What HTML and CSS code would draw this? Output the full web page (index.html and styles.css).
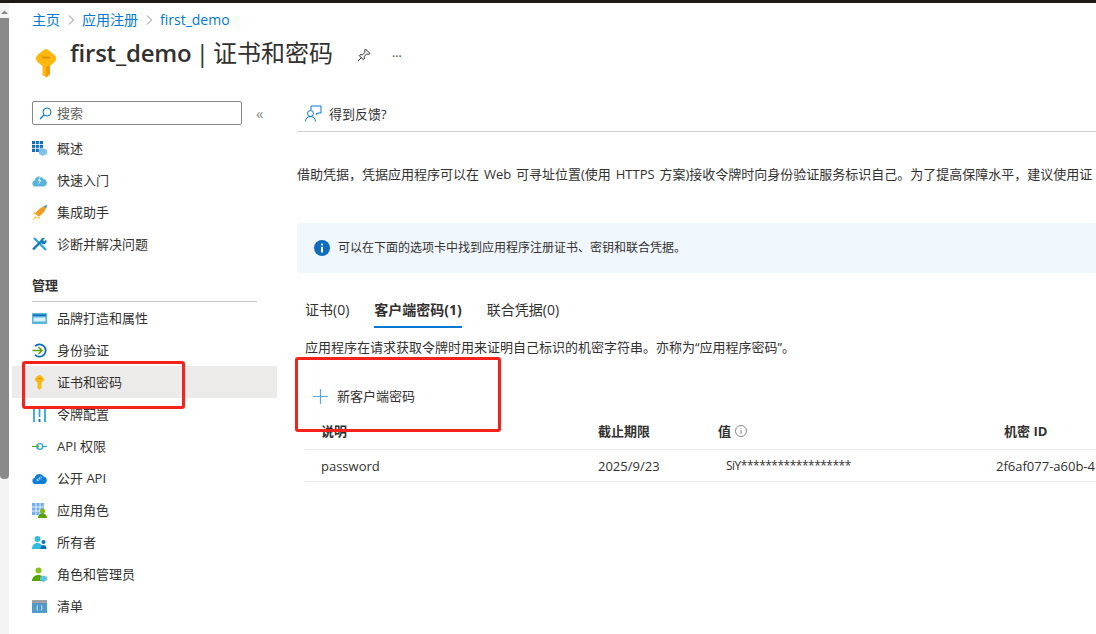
FILE: index.html
```html
<!DOCTYPE html>
<html lang="zh-CN">
<head>
    <meta charset="UTF-8">
    <meta name="viewport" content="width=device-width, initial-scale=1.0">
    <title>first_demo | 证书和密码</title>
    <link rel="stylesheet" href="styles.css">
</head>
<body>
    <div class="topline"></div>
    <div class="window">
        <div class="scrollbar">
            <svg class="scroll-arrow" width="9" height="6" viewBox="0 0 9 6"><path d="M1 5 4.500 1.500 8 5z" fill="#8a8a8a"/></svg>
            <div class="scroll-thumb"></div>
        </div>
        <div class="page">
            <div class="breadcrumb">
                <a>主页</a>
                <svg width="6" height="10" viewBox="0 0 6 10"><path d="M1 .5 5.500 5 1 9.500" fill="none" stroke="#8a8886"/></svg>
                <a>应用注册</a>
                <svg width="6" height="10" viewBox="0 0 6 10"><path d="M1 .5 5.500 5 1 9.500" fill="none" stroke="#8a8886"/></svg>
                <a>first_demo</a>
            </div>
            <div class="title-row">
                <svg class="title-key" width="20" height="29" viewBox="0 0 20 29">
                    <path d="M10 0C11 0 12 .6 13 1.400L18 5.600C19.400 6.800 20 8 20 9.500S19.400 12.200 18 13.400L14 17V25L10.500 28.500 6.500 26V17L2 13.400C.6 12.200 0 11 0 9.500S.6 6.800 2 5.600L7 1.400C8 .6 9 0 10 0z" fill="#fcb80f"/>
                    <path d="M10 17v11.500l4-3.500v-8z" fill="#f29c0c"/>
                    <rect x="6" y="7.500" width="8" height="2" rx="1" fill="#d98c0a"/>
                </svg>
                <h1><strong>first_demo</strong> | 证书和密码</h1>
                <svg class="pin" width="14" height="14" viewBox="0 0 14 14"><path d="M8.500 1 13 5.500 11.800 6.200 9.700 6 7.300 8.500 7.200 11 6.300 11.800 2.300 7.700 3 6.800 5.500 6.700 8 4.300 7.800 2.200zM4.300 9.700 1 13" fill="none" stroke="#323130"/></svg>
                <span class="more">···</span>
            </div>
            <div class="columns">
                <nav class="sidebar">
                    <div class="search-row">
                        <div class="search">
                            <svg width="13" height="13" viewBox="0 0 13 13"><circle cx="8" cy="5" r="4" fill="none" stroke="#0078d4"/><path d="M5 8 1 12" stroke="#0078d4" stroke-width="1.200"/></svg>
                            <span>搜索</span>
                        </div>
                        <span class="collapse">«</span>
                    </div>

                    <a class="nav-item">
                        <svg width="15" height="15" viewBox="0 0 15 15"><path d="M0 0h11v11H0z" fill="#0f6cbd"/><path d="M3.500 0v11M7.300 0v11M0 3.500h11M0 7.300h11" stroke="#fff" stroke-width=".8"/><path d="M10.500 7 15 9v4l-4.500 2L7 13V9z" fill="#7fc4e8"/></svg>
                        概述
                    </a>
                    <a class="nav-item">
                        <svg width="15" height="15" viewBox="0 0 15 15"><path d="M3.500 13.500a3.200 3.200 0 0 1-.7-6.300A4.700 4.700 0 0 1 11.600 6a3.800 3.800 0 0 1 0 7.500z" fill="#59b4d9"/><path d="M8.500 3.500 6.500 7.500h2l-1.500 3" fill="none" stroke="#fff"/></svg>
                        快速入门
                    </a>
                    <a class="nav-item">
                        <svg width="15" height="15" viewBox="0 0 15 15"><path d="M3 9C5 5 9 2 15 0c-1 5-4 9-8 11.500z" fill="#f59a23"/><path d="M11.500 1 15 0l-.8 3.500z" fill="#3f9bd9"/><path d="M3 6.500.5 9.500 3.500 9zM6 11.500 5.500 14.500 8.500 12zM3.500 11 .5 15l4.500-2.500z" fill="#f7c325"/></svg>
                        集成助手
                    </a>
                    <a class="nav-item">
                        <svg width="15" height="15" viewBox="0 0 15 15"><path d="M2 1 14 13" stroke="#32a6dc" stroke-width="2.400"/><path d="M1 12.500 9.500 4" stroke="#0f7cbd" stroke-width="2.400"/><path d="M9 5.500a3.200 3.200 0 0 1 4-4.500l-2 2 1.300 1.300 2-1.500a3.200 3.200 0 0 1-4.500 4z" fill="#0f7cbd"/></svg>
                        诊断并解决问题
                    </a>

                    <div class="nav-heading">管理</div>

                    <a class="nav-item">
                        <svg width="15" height="15" viewBox="0 0 15 15"><rect y="2" width="15" height="11" rx="1" fill="#59b4d9"/><rect x="1" y="3.500" width="13" height="1.500" fill="#0f6cbd"/><rect x="1.500" y="6.500" width="12" height="4" fill="#d9f1fa"/></svg>
                        品牌打造和属性
                    </a>
                    <a class="nav-item">
                        <svg width="15" height="15" viewBox="0 0 15 15"><path d="M3 3.200A6.200 6.200 0 1 1 3 11.800" fill="none" stroke="#0f6cbd" stroke-width="1.800"/><path d="M.5 7.500h9M6.500 4l3.500 3.500L6.500 11" fill="none" stroke="#57a300" stroke-width="1.400"/></svg>
                        身份验证
                    </a>
                    <a class="nav-item active">
                        <svg width="15" height="15" viewBox="0 0 15 15"><path d="M7.500 0C8.500 0 12 2.500 12 4.500 12 5.800 10.500 6.800 9.500 7.500V13L7.500 15 5.500 13V7.500C4.500 6.800 3 5.800 3 4.500 3 2.500 6.500 0 7.500 0z" fill="#fcb80f"/><rect x="5.500" y="3" width="4" height="1" fill="#e0930a"/></svg>
                        证书和密码
                    </a>
                    <a class="nav-item">
                        <svg width="15" height="15" viewBox="0 0 15 15"><path d="M2 1v14M7.500 0v10M13 1v14" stroke="#32a6dc" stroke-width="1.800"/><path d="M7.500 12v3" stroke="#0f6cbd" stroke-width="1.800"/></svg>
                        令牌配置
                    </a>
                    <a class="nav-item">
                        <svg width="15" height="15" viewBox="0 0 15 15"><path d="M0 7.500h7M4.500 5.500l2 2-2 2" fill="none" stroke="#57a300" stroke-width="1.200"/><circle cx="8" cy="7.500" r="2.800" fill="none" stroke="#32a6dc" stroke-width="1.300"/><path d="M11 7.500h4" stroke="#32a6dc" stroke-width="1.200"/></svg>
                        API 权限
                    </a>
                    <a class="nav-item">
                        <svg width="15" height="15" viewBox="0 0 15 15"><path d="M3.500 13a3.200 3.200 0 0 1-.7-6.300A4.700 4.700 0 0 1 11.600 5.500a3.800 3.800 0 0 1 0 7.500z" fill="#0f7cd6"/><path d="M5 9.500 9.500 6" stroke="#cfe8f8" stroke-width="2.200" stroke-dasharray="1.500 1"/></svg>
                        公开 API
                    </a>
                    <a class="nav-item">
                        <svg width="15" height="15" viewBox="0 0 15 15"><path d="M0 0h12v12H0z" fill="#76aef0"/><path d="M4 0v12M8 0v12M0 4h12M0 8h12" stroke="#fff" stroke-width=".8"/><circle cx="10.500" cy="8" r="2.500" fill="#7fba00"/><path d="M6 15c0-3 2-4.500 4.500-4.500S15 12 15 15z" fill="#57a300"/></svg>
                        应用角色
                    </a>
                    <a class="nav-item">
                        <svg width="15" height="15" viewBox="0 0 15 15"><circle cx="5.500" cy="4" r="3" fill="#32bedd"/><path d="M0 14c0-4 2.500-6 5.500-6s5.500 2 5.500 6z" fill="#32bedd"/><circle cx="11.500" cy="7" r="2" fill="#0f6cbd"/><path d="M8.500 14c0-2.500 1.300-4 3-4s3 1.500 3 4z" fill="#0f6cbd"/></svg>
                        所有者
                    </a>
                    <a class="nav-item">
                        <svg width="15" height="15" viewBox="0 0 15 15"><circle cx="6.500" cy="3.500" r="3" fill="#8cc020"/><path d="M0 14c0-4 3-6 6.500-6s6 2 6 6z" fill="#57a300"/><path d="M11.500 8.500 15 10v3l-3.500 2L8 13v-3z" fill="#59c4e8"/></svg>
                        角色和管理员
                    </a>
                    <a class="nav-item">
                        <svg width="15" height="15" viewBox="0 0 15 15"><rect width="15" height="13" y="1" fill="#4f9bcb"/><rect width="15" height="3" y="1" fill="#a0a1a2"/><path d="M6 6.500c-1 0-.5 2-1.200 2.500.7.500.2 2.500 1.200 2.500M9 6.500c1 0 .5 2 1.200 2.500-.7.500-.2 2.500-1.200 2.500" fill="none" stroke="#fff" stroke-width=".8"/></svg>
                        清单
                    </a>
                </nav>

                <main class="content">
                    <div class="toolbar">
                        <svg width="17" height="17" viewBox="0 0 17 17"><path d="M6 5V1h10v7h-3M13 8l-1.500 1.500V8" fill="none" stroke="#0078d4"/><circle cx="5.500" cy="8.500" r="3" fill="none" stroke="#0078d4"/><path d="M.5 16.500c0-3 2-5 5-5s5 2 5 5" fill="none" stroke="#0078d4"/></svg>
                        <span>得到反馈?</span>
                    </div>

                    <p class="intro">借助凭据，凭据应用程序可以在 Web 可寻址位置(使用 HTTPS 方案)接收令牌时向身份验证服务标识自己。为了提高保障水平，建议使用证</p>

                    <div class="banner">
                        <svg width="16" height="16" viewBox="0 0 16 16"><circle cx="8" cy="8" r="8" fill="#0f6cbd"/><circle cx="8" cy="4.500" r="1.100" fill="#fff"/><rect x="7" y="6.800" width="2" height="5.700" fill="#fff"/></svg>
                        <span>可以在下面的选项卡中找到应用程序注册证书、密钥和联合凭据。</span>
                    </div>

                    <div class="tabs">
                        <span class="tab">证书(0)</span>
                        <span class="tab selected">客户端密码(1)</span>
                        <span class="tab">联合凭据(0)</span>
                    </div>

                    <p class="tab-desc">应用程序在请求获取令牌时用来证明自己标识的机密字符串。亦称为“应用程序密码”。</p>

                    <div class="add-row">
                        <svg width="15" height="15" viewBox="0 0 15 15"><path d="M7.500 0v15M0 7.500h15" stroke="#5ba7e0" stroke-width="1.200"/></svg>
                        <span>新客户端密码</span>
                    </div>

                    <div class="secrets">
                        <div class="secret-row head">
                            <span>说明</span>
                            <span>截止期限</span>
                            <span class="value-head">值
                                <svg width="12" height="12" viewBox="0 0 12 12"><circle cx="6" cy="6" r="5.500" fill="none" stroke="#8a8886"/><path d="M6 5v4M6 3v1" stroke="#8a8886"/></svg>
                            </span>
                            <span class="id-head">机密 ID</span>
                        </div>
                        <div class="secret-row">
                            <span>password</span>
                            <span>2025/9/23</span>
                            <span class="value-cell">SiY******************</span>
                            <span class="id-cell">2f6af077-a60b-4</span>
                        </div>
                    </div>
                </main>
            </div>
        </div>
    </div>

    <!-- 截图上的红色标注框 -->
    <div class="mark mark-nav"></div>
    <div class="mark mark-add"></div>
</body>
</html>
```

FILE: styles.css
```css
html, body {
    height: 100%;
}
body {
    margin: 0;
    height: 634px;
    overflow: hidden;
    background: white;
    color: #323130;
    font-family: "Open Sans", "Noto Sans CJK SC", sans-serif;
    font-size: 13px;
    line-height: 18px;
}
.topline {
    height: 3px;
    background: #1b1a19;
}
.window {
    display: flex;
    height: 631px;
}
.scrollbar {
    width: 9px;
    flex: none;
    background: #f4f4f4;
    display: flex;
    flex-direction: column;
    padding-top: 6px;
    gap: 2px;
}
.scroll-arrow {
    display: block;
    margin-bottom: 1px;
}
.scroll-thumb {
    height: 461px;
    background: #8a8a8a;
    border-radius: 0 0 4px 4px;
}
.page {
    flex: 1;
    min-width: 0;
    padding-left: 23px;
    overflow: hidden;
}
.breadcrumb {
    display: flex;
    align-items: center;
    gap: 8px;
    height: 18px;
    margin-top: 8px;
    color: #0078d4;
    font-size: 14px;
}
.title-row {
    display: flex;
    align-items: center;
    height: 34px;
    margin-top: 7px;
}
.title-key {
    flex: none;
    margin: 21px 0 0 4px;
}
.title-row h1 {
    margin: 0 0 0 14px;
    font-size: 24px;
    font-weight: 400;
    line-height: 34px;
    word-spacing: -2px;
    white-space: nowrap;
}
.title-row h1 strong {
    font-weight: 600;
    letter-spacing: -0.2px;
}
.pin {
    margin: 4px 0 0 24px;
}
.more {
    margin: 8px 0 0 21px;
    font-size: 12px;
}
.columns {
    display: flex;
    margin-top: 31px;
}
.sidebar {
    width: 265px;
    margin-left: -20px;
    flex: none;
}
.search-row {
    display: flex;
    align-items: center;
    height: 24px;
    padding-left: 20px;
    margin-bottom: 7px;
}
.search {
    width: 210px;
    height: 24px;
    box-sizing: border-box;
    border: 1px solid #8a8886;
    border-radius: 2px;
    display: flex;
    align-items: center;
    gap: 5px;
    padding-left: 6px;
    color: #605e5c;
}
.collapse {
    margin-left: 14px;
    color: #8a8886;
    font-size: 15px;
}
.nav-item {
    display: flex;
    align-items: center;
    gap: 10px;
    height: 32px;
    padding-left: 20px;
}
.nav-item.active {
    background: #edebe9;
}
.nav-heading {
    margin: 9px 0 0 20px;
    width: 225px;
    height: 33px;
    box-sizing: border-box;
    padding-top: 7px;
    border-bottom: 1px solid #c8c6c4;
    font-weight: 700;
}
.content {
    flex: 1;
    min-width: 0;
    margin-left: 20px;
    overflow: hidden;
}
.toolbar {
    display: flex;
    align-items: center;
    gap: 7px;
    height: 35px;
    padding: 0 0 0 8px;
    margin-top: -5px;
    border-bottom: 1px solid #d2d0ce;
}
.intro {
    margin: 33px 0 0;
    word-spacing: 1.5px;
    white-space: nowrap;
}
.banner {
    display: flex;
    align-items: center;
    gap: 8px;
    height: 50px;
    margin-top: 40px;
    padding-left: 17px;
    background: #eff6fc;
    border-radius: 2px;
    font-size: 12px;
}
.tabs {
    display: flex;
    gap: 25px;
    margin: 26px 0 0 8px;
    height: 27px;
    font-size: 14px;
}
.tab {
    height: 25px;
    padding-top: 2px;
}
.tab.selected {
    font-weight: 700;
    border-bottom: 2px solid #0078d4;
}
.tab-desc {
    margin: 12px 0 0 8px;
    white-space: nowrap;
}
.add-row {
    display: flex;
    align-items: center;
    gap: 9px;
    margin: 31px 0 0 16px;
    height: 18px;
}
.secrets {
    margin: 8px 0 0 8px;
}
.secret-row {
    display: grid;
    grid-template-columns: 277px 120px 286px 200px;
    align-items: center;
    height: 31px;
    padding-left: 16px;
    border-bottom: 1px solid #edebe9;
    white-space: nowrap;
}
.secret-row.head {
    height: 36px;
    font-weight: 700;
}
.value-head {
    display: flex;
    align-items: center;
    gap: 4px;
}
.value-cell {
    padding-left: 8px;
    font-size: 12px;
    letter-spacing: -0.5px;
}
.id-cell {
    margin-left: -8px;
}
/* 标注框压在内容上面 */
.mark {
    position: absolute;
    box-sizing: border-box;
    border: 3px solid #f5211b;
    border-radius: 3px;
}
.mark-nav {
    left: 22px;
    top: 361px;
    width: 163px;
    height: 48px;
}
.mark-add {
    left: 295px;
    top: 357px;
    width: 206px;
    height: 75px;
}
```
